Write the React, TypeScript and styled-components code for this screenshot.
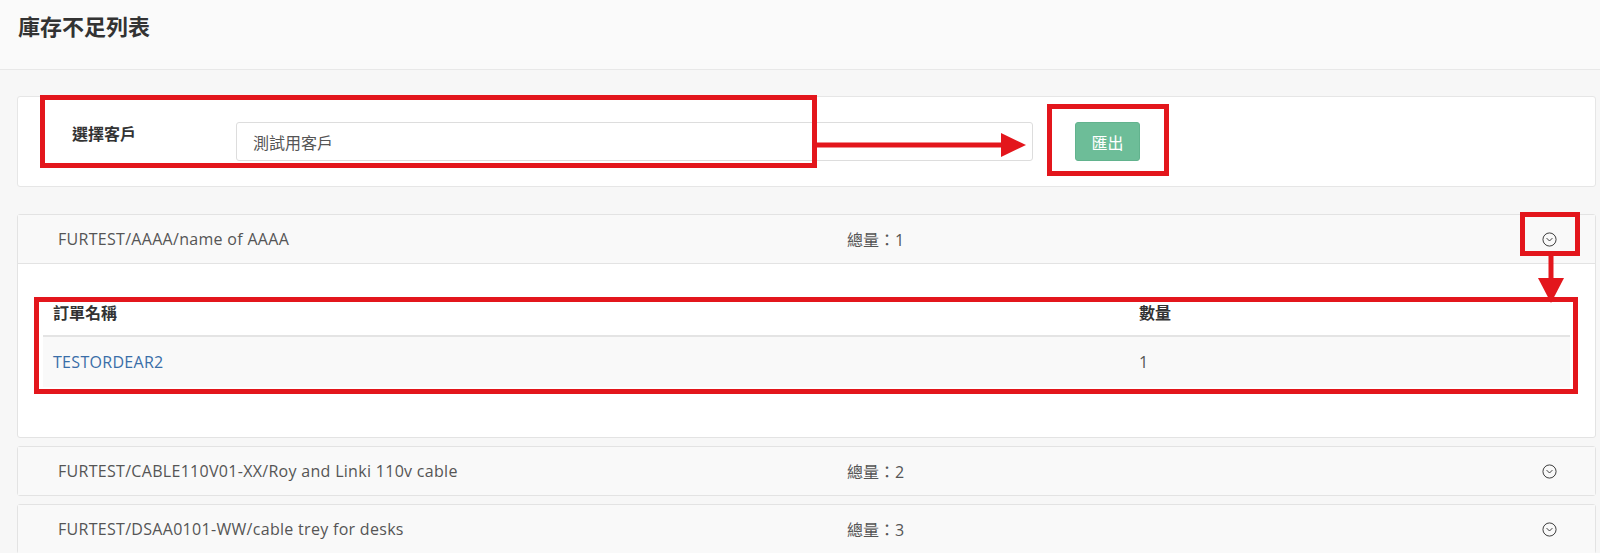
import React from 'react';
import styled, { createGlobalStyle } from 'styled-components';

const GlobalStyle = createGlobalStyle`
  html, body {
    margin: 0;
    padding: 0;
    background: #f7f7f7;
    font-family: 'Open Sans', 'Noto Sans CJK TC', sans-serif;
    color: #555;
    overflow: hidden;
  }
`;

const Page = styled.div`
  position: relative;
  width: 1600px;
  min-height: 553px;
`;

const TopBar = styled.header`
  height: 70px;
  box-sizing: border-box;
  padding: 11px 0 0 18px;
  background: #fafafa;
  border-bottom: 1px solid #e8e8e8;
`;

const Title = styled.h1`
  margin: 0;
  font-size: 22px;
  line-height: 30px;
  font-weight: 700;
  color: #333;
`;

const Content = styled.main`
  display: flex;
  flex-direction: column;
  padding: 26px 4px 0 17px;
`;

const FilterCard = styled.section`
  display: flex;
  align-items: flex-start;
  margin-bottom: 27px;
  padding: 25px 0 25px 54px;
  background: #fff;
  border: 1px solid #e6e6e6;
  border-radius: 3px;
`;

const FilterLabel = styled.label`
  width: 164px;
  font-size: 16px;
  line-height: 24px;
  font-weight: 700;
  color: #333;
`;

const CustomerInput = styled.input`
  width: 797px;
  height: 39px;
  box-sizing: border-box;
  padding: 0 16px;
  border: 1px solid #ddd;
  border-radius: 3px;
  font-family: inherit;
  font-size: 16px;
  color: #555;
  outline: none;
`;

const ExportButton = styled.button`
  margin-left: 42px;
  width: 65px;
  height: 39px;
  border: 1px solid #62b38e;
  border-radius: 3px;
  background: #6dbd98;
  color: #fff;
  font-family: inherit;
  font-size: 16px;
  cursor: pointer;
`;

const ItemList = styled.div`
  display: flex;
  flex-direction: column;
  gap: 8px;
`;

const ItemCard = styled.div`
  background: #fff;
  border: 1px solid #e3e3e3;
  border-radius: 3px;
`;

const ItemHeader = styled.div<{ $open?: boolean }>`
  display: grid;
  grid-template-columns: 789px 1fr auto;
  align-items: center;
  height: 48px;
  padding: 0 38px 0 40px;
  background: #f9f9f9;
  border-bottom: ${(p) => (p.$open ? '1px solid #e3e3e3' : 'none')};
  font-size: 16px;
  color: #555;
`;

const ItemName = styled.span`
  letter-spacing: 0.3px;
`;

const ToggleIcon = styled.svg`
  width: 15px;
  height: 15px;
  display: block;
`;

const ItemBody = styled.div`
  padding: 27px 25px 50px;
`;

const OrderTable = styled.table`
  width: 100%;
  border-collapse: collapse;
  font-size: 16px;
`;

const HeadCell = styled.th<{ $width?: number }>`
  width: ${(p) => (p.$width ? `${p.$width}px` : 'auto')};
  padding: 11px 10px;
  line-height: 22px;
  text-align: left;
  font-weight: 700;
  color: #333;
  border-bottom: 2px solid #e4e4e4;
`;

const BodyRow = styled.tr`
  background: #f9f9f9;
`;

const BodyCell = styled.td`
  padding: 14px 10px;
  line-height: 22px;
  color: #555;
`;

const OrderLink = styled.a`
  color: #3a6ea8;
  text-decoration: none;
  letter-spacing: 0.3px;
`;

const Annotations = styled.svg`
  position: absolute;
  top: 0;
  left: 0;
  pointer-events: none;
`;

const RED = '#e3161c';

type Item = { name: string; total: number; orders?: { name: string; qty: number }[] };

const items: Item[] = [
  { name: 'FURTEST/AAAA/name of AAAA', total: 1, orders: [{ name: 'TESTORDEAR2', qty: 1 }] },
  { name: 'FURTEST/CABLE110V01-XX/Roy and Linki 110v cable', total: 2 },
  { name: 'FURTEST/DSAA0101-WW/cable trey for desks', total: 3 },
];

const ChevronCircle = () => (
  <ToggleIcon viewBox="0 0 16 16" fill="none" stroke="#333" strokeWidth="1">
    <circle cx="8" cy="8" r="7" />
    <path d="M5.2 6.8 8 9.6l2.8-2.8" strokeLinecap="round" strokeLinejoin="round" />
  </ToggleIcon>
);

const App: React.FC = () => {
  return (
    <Page>
      <GlobalStyle />
      <TopBar>
        <Title>庫存不足列表</Title>
      </TopBar>

      <Content>
        <FilterCard>
          <FilterLabel>選擇客戶</FilterLabel>
          <CustomerInput defaultValue="測試用客戶" />
          <ExportButton>匯出</ExportButton>
        </FilterCard>

        <ItemList>
          {items.map((item) => (
            <ItemCard key={item.name}>
              <ItemHeader $open={!!item.orders}>
                <ItemName>{item.name}</ItemName>
                <span>總量：{item.total}</span>
                <ChevronCircle />
              </ItemHeader>
              {item.orders && (
                <ItemBody>
                  <OrderTable>
                    <thead>
                      <tr>
                        <HeadCell $width={1066}>訂單名稱</HeadCell>
                        <HeadCell>數量</HeadCell>
                      </tr>
                    </thead>
                    <tbody>
                      {item.orders.map((o) => (
                        <BodyRow key={o.name}>
                          <BodyCell>
                            <OrderLink href="#">{o.name}</OrderLink>
                          </BodyCell>
                          <BodyCell>{o.qty}</BodyCell>
                        </BodyRow>
                      ))}
                    </tbody>
                  </OrderTable>
                </ItemBody>
              )}
            </ItemCard>
          ))}
        </ItemList>
      </Content>

      {/* red callouts drawn over the screenshot */}
      <Annotations width="1600" height="553" viewBox="0 0 1600 553" fill="none">
        <rect x="42.5" y="97.5" width="772" height="68" stroke={RED} strokeWidth="5" />
        <rect x="1049.5" y="106.5" width="117" height="67" stroke={RED} strokeWidth="5" />
        <rect x="1522.5" y="214.5" width="55" height="39" stroke={RED} strokeWidth="5" />
        <rect x="36.5" y="299.5" width="1539" height="92" stroke={RED} strokeWidth="5" />
        <line x1="815" y1="145" x2="1003" y2="145" stroke={RED} strokeWidth="5" />
        <polygon points="1001,133 1026,145 1001,157" fill={RED} />
        <line x1="1551" y1="256" x2="1551" y2="280" stroke={RED} strokeWidth="5" />
        <polygon points="1538,278 1564,278 1551,303" fill={RED} />
      </Annotations>
    </Page>
  );
};

export default App;
